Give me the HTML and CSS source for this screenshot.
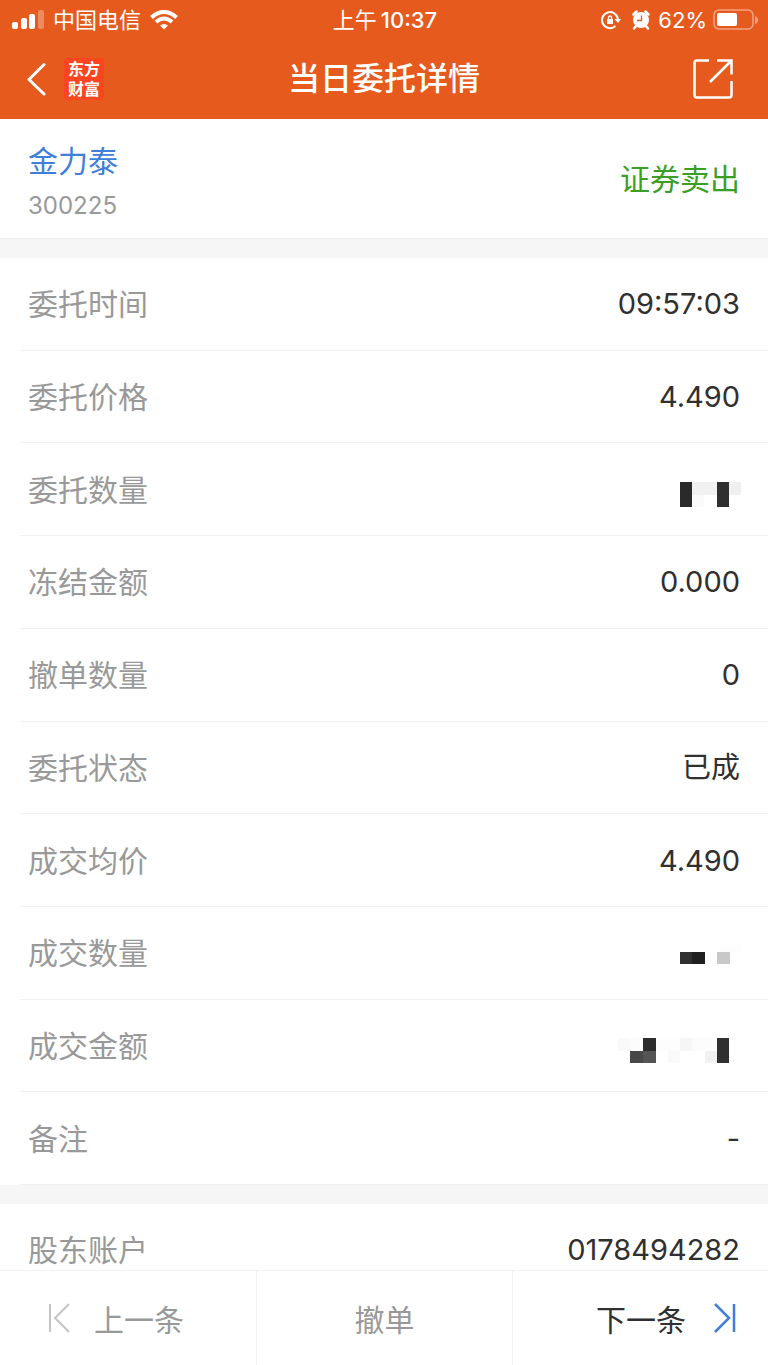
FILE: index.html
```html
<!DOCTYPE html>
<html lang="zh-CN">
<head>
<meta charset="utf-8">
<meta name="viewport" content="width=device-width, initial-scale=1">
<title>当日委托详情</title>
<link rel="stylesheet" href="styles.css">
</head>
<body>
<header class="header">
    <div class="status">
        <div class="status-left">
            <svg width="32" height="20" viewBox="0 0 32 20" fill="#fff">
                <rect x="0" y="12" width="6" height="7" rx="2"/>
                <rect x="9" y="8" width="6" height="11" rx="2"/>
                <rect x="17" y="4" width="6" height="15" rx="2"/>
                <rect x="26" y="0" width="6" height="19" rx="2" opacity=".3"/>
            </svg>
            <span class="carrier">中国电信</span>
            <svg width="28" height="20" viewBox="0 0 28 20" fill="none" stroke="#fff" stroke-width="4">
                <path d="M1.500 7.500Q14-3.500 26.500 7.500"/>
                <path d="M6 12Q14 5 22 12"/>
                <path d="M10 15.500Q14 12.500 18 15.500L14 19.500Z" fill="#fff" stroke="none"/>
            </svg>
        </div>
        <div class="status-time">上午<b>10:37</b></div>
        <div class="status-right">
            <svg width="20" height="20" viewBox="0 0 20 20" fill="none" stroke="#fff" stroke-width="2">
                <path d="M14.500 16A8 8 0 1 1 17 9"/>
                <path d="M13.500 9H20L17 13Z" fill="#fff" stroke="none"/>
                <rect x="6" y="9" width="6" height="5" fill="#fff" stroke="none"/>
                <path d="M7.500 9V7.500a1.500 1.500 0 0 1 3 0V9" stroke-width="1.300"/>
            </svg>
            <svg class="alarm" width="18" height="20" viewBox="0 0 18 20">
                <path d="M1.500 4.500 4.500 1.500M16.500 4.500 13.500 1.500M4 16 2 18.500M14 16 16 18.500" stroke="#fff" stroke-width="2.500" stroke-linecap="round"/>
                <circle cx="9" cy="10" r="8" fill="#fff"/>
                <path d="M9.500 5.500V10.500H5" fill="none" stroke="#e65a1e" stroke-width="1.300"/>
            </svg>
            <span class="percent">62%</span>
            <svg width="45" height="22" viewBox="0 0 45 22">
                <rect x="1" y="1" width="39" height="19" rx="5" fill="none" stroke="#fff" stroke-width="1.500" opacity=".45"/>
                <rect x="4" y="4" width="20" height="13" rx="2" fill="#fff"/>
                <path d="M42 7q3 1 3 4t-3 4Z" fill="#fff" opacity=".45"/>
            </svg>
        </div>
    </div>
    <div class="navbar">
        <div class="nav-left">
            <button class="icon-btn" type="button" aria-label="返回">
                <svg width="20" height="34" viewBox="0 0 20 34" fill="none" stroke="#fff" stroke-width="3" stroke-linecap="round" stroke-linejoin="round">
                    <path d="M17 2.500 2 17.500 17 32"/>
                </svg>
            </button>
            <a class="logo" href="#">东方<br>财富</a>
        </div>
        <h1 class="title">当日委托详情</h1>
        <div class="nav-right">
            <button class="icon-btn" type="button" aria-label="分享">
                <svg width="40" height="40" viewBox="0 0 40 40" fill="none" stroke="#fff" stroke-width="2.500">
                    <path d="M16 1.500H4Q1.500 1.500 1.500 4V36Q1.500 38.500 4 38.500H36Q38.500 38.500 38.500 36V22"/>
                    <path d="M24 1.500H38.500V15.500M38.500 1.500 17 23"/>
                </svg>
            </button>
        </div>
    </div>
</header>

<main class="main">
    <section class="stock">
        <div>
            <a class="stock-name" href="#">金力泰</a>
            <div class="stock-code">300225</div>
        </div>
        <span class="side">证券卖出</span>
    </section>

    <dl class="list">
        <div class="row"><dt>委托时间</dt><dd>09:57:03</dd></div>
        <div class="row"><dt>委托价格</dt><dd>4.490</dd></div>
        <div class="row">
            <dt>委托数量</dt>
            <dd class="masked">
                <svg width="124" height="26" viewBox="0 0 124 26">
                    <rect x="74" y="0" width="36" height="13" fill="#f1f1f1"/>
                    <rect x="74" y="13" width="12" height="12" fill="#fafafa"/>
                    <rect x="111" y="0" width="12" height="13" fill="#f0f0f0"/>
                    <rect x="62" y="0" width="12" height="25" fill="#2a2a2a"/>
                    <rect x="99" y="0" width="12" height="25" fill="#2f2f2f"/>
                </svg>
            </dd>
        </div>
        <div class="row"><dt>冻结金额</dt><dd>0.000</dd></div>
        <div class="row"><dt>撤单数量</dt><dd>0</dd></div>
        <div class="row"><dt>委托状态</dt><dd>已成</dd></div>
        <div class="row"><dt>成交均价</dt><dd>4.490</dd></div>
        <div class="row">
            <dt>成交数量</dt>
            <dd class="masked">
                <svg width="124" height="26" viewBox="0 0 124 26">
                    <rect x="99" y="0" width="25" height="7" fill="#fdfdfd"/>
                    <rect x="62" y="7" width="13" height="12" fill="#303030"/>
                    <rect x="74" y="7" width="13" height="12" fill="#202020"/>
                    <rect x="99" y="7" width="13" height="12" fill="#c8c8c8"/>
                </svg>
            </dd>
        </div>
        <div class="row">
            <dt>成交金额</dt>
            <dd class="masked">
                <svg width="124" height="26" viewBox="0 0 124 26">
                    <rect x="0" y="0" width="12" height="13" fill="#f9f9f9"/>
                    <rect x="12" y="0" width="13" height="13" fill="#fcfcfc"/>
                    <rect x="25" y="0" width="13" height="13" fill="#2c2c2c"/>
                    <rect x="12" y="13" width="13" height="12" fill="#484848"/>
                    <rect x="25" y="13" width="13" height="12" fill="#545454"/>
                    <rect x="38" y="0" width="24" height="13" fill="#fdfdfd"/>
                    <rect x="50" y="13" width="12" height="12" fill="#fafafa"/>
                    <rect x="62" y="0" width="12" height="13" fill="#f6f6f6"/>
                    <rect x="74" y="0" width="25" height="13" fill="#fcfcfc"/>
                    <rect x="87" y="13" width="12" height="12" fill="#f1f1f1"/>
                    <rect x="99" y="0" width="12" height="25" fill="#303030"/>
                </svg>
            </dd>
        </div>
        <div class="row"><dt>备注</dt><dd>-</dd></div>
    </dl>

    <dl class="account">
        <dt>股东账户</dt><dd>0178494282</dd>
    </dl>
</main>

<footer class="footer">
    <button class="foot-btn prev" type="button" disabled>
        <svg width="22" height="30" viewBox="0 0 22 30" fill="none" stroke="#c4c4c4" stroke-width="2">
            <path d="M2 1V29M21 1 7 15 21 29"/>
        </svg>
        上一条
    </button>
    <button class="foot-btn" type="button" disabled>撤单</button>
    <button class="foot-btn next" type="button">
        下一条
        <svg width="22" height="30" viewBox="0 0 22 30" fill="none" stroke="#3f7edb" stroke-width="2.500">
            <path d="M20 1V29M1 1 15 15 1 29"/>
        </svg>
    </button>
</footer>
</body>
</html>
```
FILE: styles.css
```css
* {
    box-sizing: border-box;
    margin: 0;
    padding: 0;
}
body {
    display: flex;
    flex-direction: column;
    min-height: 100vh;
    background-color: #f6f6f7;
    color: #303030;
    font-family: Inter, "Noto Sans CJK SC", sans-serif;
    font-size: 29px;
    line-height: 40px;
}
a {
    text-decoration: none;
}
button {
    border: 0;
    background: none;
    font-family: inherit;
    color: inherit;
}
svg {
    display: block;
    flex: none;
}

/* 顶部 */
.header {
    height: 119px;
    background-color: #e65a1e;
    color: #fff;
}
.status,
.navbar {
    display: grid;
    grid-template-columns: 1fr auto 1fr;
    align-items: center;
}
.status {
    height: 38px;
    padding: 0 10px 0 12px;
    font-size: 22px;
}
.status-left,
.status-right {
    display: flex;
    align-items: center;
    gap: 9px;
}
.status-right {
    justify-content: flex-end;
    gap: 6px;
}
.alarm {
    margin: 0 2px 0 5px;
}
.status-time b {
    margin-left: 4px;
    font-weight: 500;
}
.navbar {
    height: 81px;
    padding: 0 27px;
}
.nav-left {
    display: flex;
    align-items: center;
    gap: 17px;
}
.nav-right {
    display: flex;
    justify-content: flex-end;
    padding-right: 8px;
}
.logo {
    padding: 0 4px 2px;
    border-radius: 4px;
    background-color: #fb4521;
    color: #fff;
    font-family: "Noto Sans CJK SC", sans-serif;
    font-size: 16px;
    font-weight: 700;
    line-height: 20px;
}
.title {
    font-size: 32px;
    font-weight: 500;
}

/* 股票 */
.main {
    display: flex;
    flex: 1;
    flex-direction: column;
    gap: 19px;
}
.stock {
    display: flex;
    align-items: center;
    justify-content: space-between;
    height: 120px;
    padding: 0 28px;
    border-bottom: 1px solid #f0f0f0;
    background-color: #fff;
}
.stock-name {
    display: block;
    padding-top: 4px;
    color: #3f7edb;
    font-size: 30px;
    line-height: 50px;
}
.stock-code {
    color: #999;
    font-size: 24px;
}
.side {
    color: #3b9f25;
    font-size: 30px;
}

/* 委托明细 */
.list {
    display: flex;
    flex: 1;
    flex-direction: column;
    padding-left: 20px;
    background-color: #fff;
}
.row {
    display: flex;
    flex: 1;
    align-items: center;
    justify-content: space-between;
    min-height: 60px;
    padding: 1px 28px 0 8px;
    border-bottom: 1px solid #f0f0f0;
}
dt {
    color: #999;
    font-size: 30px;
}
.masked {
    margin-right: -2px;
    padding-top: 10px;
}
.account {
    display: flex;
    justify-content: space-between;
    height: 66px;
    padding: 26px 28px 0;
    background-color: #fff;
}

/* 底部按钮 */
.footer {
    position: sticky;
    bottom: 0;
    display: grid;
    grid-template-columns: 1fr 1fr 1fr;
    height: 95px;
    border-top: 1px solid #f0f0f0;
    background-color: #fff;
}
.foot-btn {
    display: flex;
    align-items: center;
    justify-content: center;
    gap: 24px;
    font-size: 30px;
}
.foot-btn + .foot-btn {
    border-left: 1px solid #f0f0f0;
}
.foot-btn:disabled {
    color: #999;
}
.prev {
    justify-content: flex-start;
    padding-left: 48px;
}
.next {
    justify-content: flex-end;
    gap: 28px;
    padding-right: 32px;
}
```
